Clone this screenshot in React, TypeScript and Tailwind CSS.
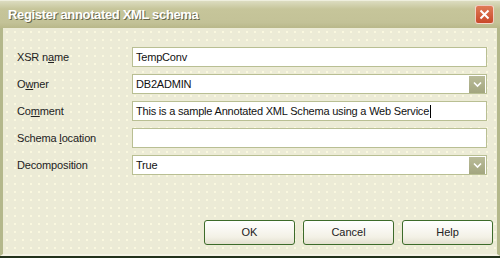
import { ReactNode } from 'react';

function Label({ children }: { children: ReactNode }) {
  return <div className="w-[115px] text-[11px] tracking-[-0.15px] text-[#222]">{children}</div>;
}

function Field({ value, dropdown, caret }: { value: string; dropdown?: boolean; caret?: boolean }) {
  return (
    <div className="flex-1 h-[20px] flex items-center bg-white border border-[#b9bf93] pl-[3px] pr-[1px] text-[11px] tracking-[-0.2px] text-[#111]">
      <span className="flex-1 flex items-center">
        {value}
        {caret && <span className="inline-block w-px h-[13px] bg-black ml-px" />}
      </span>
      {dropdown && (
        <span className="w-[16px] h-[17px] bg-[linear-gradient(#b9bb98,#a3a67f)] flex items-center justify-center">
          <svg width="9" height="7" viewBox="0 0 9 7">
            <path d="M1 1.5 L4.5 5 L8 1.5" stroke="white" strokeWidth="1.6" fill="none" />
          </svg>
        </span>
      )}
    </div>
  );
}

function Button({ label }: { label: string }) {
  return (
    <div className="w-[91px] h-[25px] rounded-[3px] border border-[#3d6b2a] bg-[linear-gradient(#ffffff,#f3f1e6_70%,#e3e0cf)] flex items-center justify-center text-[11px] text-[#222]">
      {label}
    </div>
  );
}

export default function App() {
  return (
    <div className="w-[500px] h-[258px] flex flex-col overflow-hidden font-['Liberation_Sans',Arial,sans-serif] bg-[#22311b]">
      <div className="h-[28px] flex items-center justify-between pl-[8px] pr-[6px] bg-[linear-gradient(#dcdcc0,#c6c59a_30%,#c3c297_80%,#b9b88a)] border-t border-[#eeeedd]">
        <span className="text-[13px] font-bold tracking-[-0.35px] text-white [text-shadow:1px_1px_0_#66664a]">
          Register annotated XML schema
        </span>
        <span className="w-[19px] h-[19px] rounded-[3px] border border-white/70 bg-[linear-gradient(#df7a56,#c9482a)] flex items-center justify-center">
          <svg width="11" height="11" viewBox="0 0 11 11">
            <path d="M1.5 1.5 L9.5 9.5 M9.5 1.5 L1.5 9.5" stroke="white" strokeWidth="2" />
          </svg>
        </span>
      </div>
      <div className="h-[228px] flex border-l-[3px] border-r-[3px] border-[#b4b88b] bg-[#ecebd6] bg-[radial-gradient(circle,#faf8df_0.8px,transparent_1px)] bg-[length:8px_8px] border-b-[2px] border-b-[#f4f2e4]">
        <div className="flex-1 flex flex-col pl-[14px] pr-[10px] pt-[19px]">
          <div className="flex flex-col gap-[7px]">
            <div className="flex items-center">
              <Label>XSR n<u>a</u>me</Label>
              <Field value="TempConv" />
            </div>
            <div className="flex items-center">
              <Label>O<u>w</u>ner</Label>
              <Field value="DB2ADMIN" dropdown />
            </div>
            <div className="flex items-center">
              <Label>Co<u>m</u>ment</Label>
              <Field value="This is a sample Annotated XML Schema using a Web Service" caret />
            </div>
            <div className="flex items-center">
              <Label>Schema <u>l</u>ocation</Label>
              <Field value="" />
            </div>
            <div className="flex items-center">
              <Label>Decomposition</Label>
              <Field value="True" dropdown />
            </div>
          </div>
          <div className="flex justify-end gap-[8px] mt-[45px] mr-[-6px]">
            <Button label="OK" />
            <Button label="Cancel" />
            <Button label="Help" />
          </div>
        </div>
      </div>
    </div>
  );
}
